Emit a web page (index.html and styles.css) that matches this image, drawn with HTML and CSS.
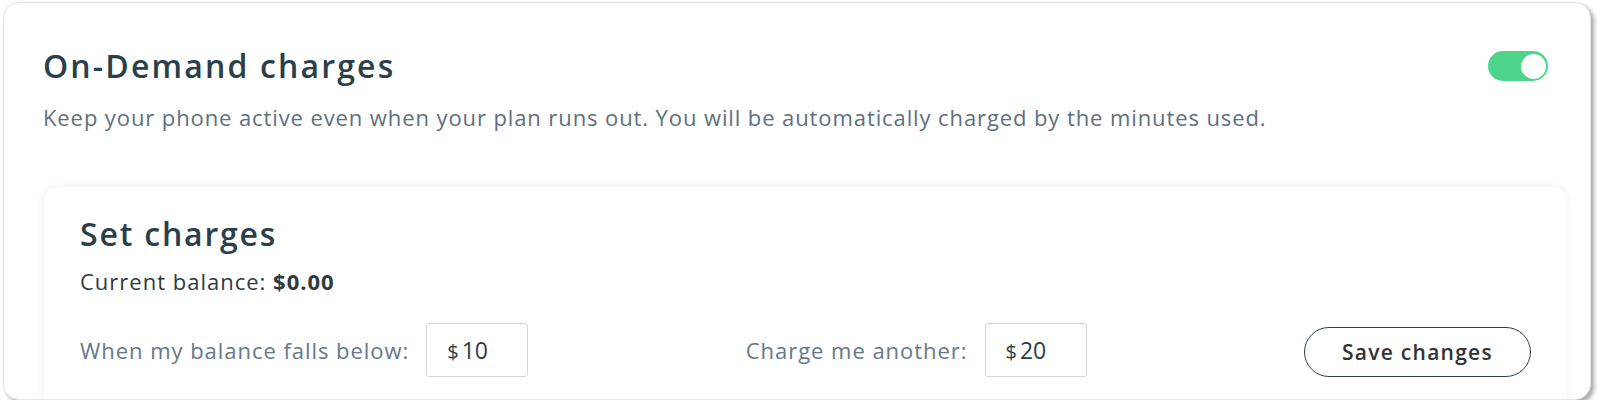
FILE: index.html
```html
<!DOCTYPE html>
<html lang="en">
<head>
<meta charset="utf-8">
<title>On-Demand charges</title>
<link rel="stylesheet" href="styles.css">
</head>
<body>
<div class="card">
  <div class="head">
    <h1 class="title">On-Demand charges</h1>
    <button class="toggle" aria-pressed="true" aria-label="On-Demand charges"><span class="knob"></span></button>
  </div>
  <p class="desc">Keep your phone active even when your plan runs out. You will be automatically charged by the minutes used.</p>
  <section class="panel">
    <h2 class="panel-title">Set charges</h2>
    <p class="balance">Current balance: <strong>$0.00</strong></p>
    <div class="row">
      <div class="field">
        <span class="label">When my balance falls below:</span>
        <span class="input"><span class="cur">$</span><span class="amt">10</span></span>
      </div>
      <div class="field">
        <span class="label">Charge me another:</span>
        <span class="input"><span class="cur">$</span><span class="amt">20</span></span>
      </div>
      <button class="save">Save changes</button>
    </div>
  </section>
</div>
</body>
</html>
```

FILE: styles.css
```css
* { box-sizing: border-box; }

html, body {
  margin: 0;
  padding: 0;
  background: #ffffff;
}

body {
  font-family: "Open Sans", "Noto Sans", sans-serif;
  letter-spacing: 0.96px;
  color: #2a3f4a;
}

.card {
  margin: 2px 0 0 3px;
  width: 1588px;
  height: 398px;
  overflow: hidden;
  background: #ffffff;
  border: 1px solid #e6e6e6;
  border-radius: 16px;
  box-shadow: 3px 3px 4px rgba(0, 0, 0, 0.35);
  padding: 43px 42px 0 39px;
}

.head {
  display: flex;
  align-items: flex-start;
  justify-content: space-between;
}

.title {
  margin: 0;
  font-size: 32px;
  line-height: 40px;
  font-weight: 600;
  letter-spacing: 2.16px;
  color: #2a3f4a;
}

.toggle {
  position: relative;
  width: 60px;
  height: 30px;
  margin-top: 5px;
  padding: 0;
  border: none;
  border-radius: 15px;
  background: #4fd48b;
  cursor: pointer;
}

.knob {
  position: absolute;
  top: 2.5px;
  right: 2.5px;
  width: 25px;
  height: 25px;
  border-radius: 50%;
  background: #ffffff;
}

.desc {
  margin: 16px 0 0;
  font-size: 22px;
  line-height: 30px;
  letter-spacing: 0.9px;
  color: #5d7080;
}

.panel {
  margin: 55px -19px 0 1px;
  height: 260px;
  padding: 27px 36px 0 36px;
  border-radius: 14px;
  background: #ffffff;
  box-shadow: 0 0 10px rgba(0, 0, 0, 0.07);
}

.panel-title {
  margin: 0;
  font-size: 32px;
  line-height: 40px;
  font-weight: 600;
  letter-spacing: 1.8px;
  color: #2a3f4a;
}

.balance {
  margin: 12px 0 0;
  font-size: 22px;
  line-height: 30px;
  letter-spacing: 1px;
  color: #2e3a40;
}

.balance strong {
  font-weight: 700;
}

.row {
  margin-top: 27px;
  display: flex;
  align-items: center;
  justify-content: space-between;
}

.field {
  display: flex;
  align-items: center;
  gap: 17px;
}

.label {
  font-size: 22px;
  line-height: 30px;
  color: #65788a;
}

.input {
  display: flex;
  align-items: baseline;
  width: 102px;
  height: 54px;
  padding: 10px 0 0 20px;
  border: 1px solid #d3d7db;
  border-radius: 3px;
  color: #2b3d46;
  letter-spacing: 0;
}

.cur {
  font-size: 20px;
  margin-right: 3px;
}

.amt {
  font-size: 23px;
}

.save {
  width: 227px;
  height: 50px;
  margin-top: 4px;
  border: 1.5px solid #2c3e50;
  border-radius: 25px;
  background: #ffffff;
  font-family: inherit;
  font-size: 21px;
  font-weight: 600;
  letter-spacing: 1.26px;
  color: #333333;
  cursor: pointer;
}
```
